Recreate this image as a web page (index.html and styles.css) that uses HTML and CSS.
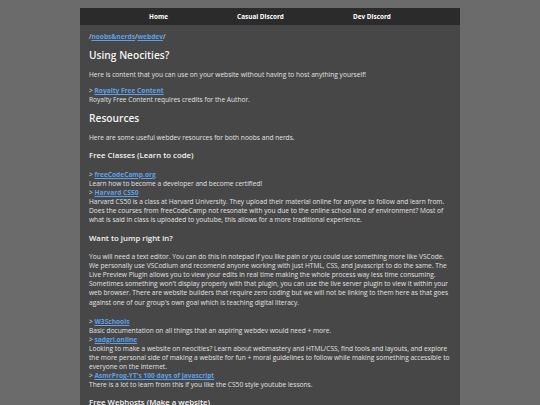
FILE: index.html
```html
<!DOCTYPE html>
<html lang="en">
<head>
<meta charset="utf-8">
<title>Webdev - noobs&amp;nerds</title>
<link rel="stylesheet" href="styles.css">
</head>
<body>
<div class="page">
  <nav class="nav">
    <a href="#">Home</a>
    <a href="#">Casual Discord</a>
    <a href="#">Dev Discord</a>
  </nav>
  <main class="content">
    <p class="crumbs">/<a href="#">noobs&amp;nerds</a>/<a href="#">webdev</a>/</p>
    <h1>Using Neocities?</h1>
    <p>Here is content that you can use on your website without having to host anything yourself!</p>
    <p>&gt; <a href="#">Royalty Free Content</a><br>Royalty Free Content requires credits for the Author.</p>
    <h1>Resources</h1>
    <p>Here are some useful webdev resources for both noobs and nerds.</p>
    <h3>Free Classes (Learn to code)</h3>
    <p>&gt; <a href="#">freeCodeCamp.org</a><br>Learn how to become a developer and become certified!<br>&gt; <a href="#">Harvard CS50</a><br>Harvard CS50 is a class at Harvard University. They upload their material online for anyone to follow and learn from. Does the courses from freeCodeCamp not resonate with you due to the online school kind of environment? Most of what is said in class is uploaded to youtube, this allows for a more traditional experience.</p>
    <h3>Want to jump right in?</h3>
    <p>You will need a text editor. You can do this in notepad if you like pain or you could use something more like VSCode. We personally use VSCodium and recomend anyone working with just HTML, CSS, and Javascript to do the same. The Live Preview Plugin allows you to view your edits in real time making the whole process way less time consuming. Sometimes something won't display properly with that plugin, you can use the live server plugin to view it within your web browser. There are website builders that require zero coding but we will not be linking to them here as that goes against one of our group's own goal which is teaching digital literacy.</p>
    <p class="links">&gt; <a href="#">W3Schools</a><br>Basic documentation on all things that an aspiring webdev would need + more.<br>&gt; <a href="#">sadgrl.online</a><br>Looking to make a website on neocities? Learn about webmastery and HTML/CSS, find tools and layouts, and explore the more personal side of making a website for fun + moral guidelines to follow while making something accessible to everyone on the internet.<br>&gt; <a href="#">AsmrProg-YT's 100 days of javascript</a><br>There is a lot to learn from this if you like the CS50 style youtube lessons.</p>
    <h3>Free Webhosts (Make a website)</h3>
    <p>&gt; <a href="#">Neocities</a><br>Free static web hosting with a friendly community of personal websites.</p>
  </main>
</div>
</body>
</html>
```
FILE: styles.css
```css
html, body {
  margin: 0;
  padding: 0;
  background: #6b6b6b;
}
body {
  font-family: "Open Sans", "Noto Sans", sans-serif;
  color: #e2e2e2;
  padding-top: 8px;
}
.page {
  width: 380px;
  margin: 0 auto;
}
.nav {
  display: flex;
  justify-content: space-evenly;
  align-items: center;
  height: 17px;
  background: #2b2b2b;
}
.nav a {
  color: #ffffff;
  font-size: 6.4px;
  font-weight: 700;
  text-decoration: none;
}
.content {
  background: #474747;
  padding: 7px 9px 10px;
}
p {
  font-size: 6.6px;
  line-height: 9.1px;
  margin: 7px 0;
}
.crumbs {
  margin-top: 0;
}
.links {
  margin-top: 10px;
}
a {
  color: #5ea1e6;
  font-weight: 700;
  text-decoration: underline;
}
h1 {
  font-size: 10.2px;
  line-height: 15px;
  font-weight: 600;
  color: #f2f2f2;
  margin: 7px 0;
}
h3 {
  font-size: 7.8px;
  line-height: 11.5px;
  font-weight: 600;
  color: #f2f2f2;
  margin: 8px 0;
}
```
